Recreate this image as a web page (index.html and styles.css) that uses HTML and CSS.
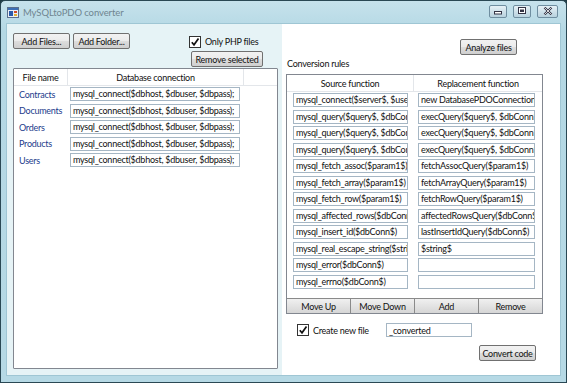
FILE: index.html
```html
<!DOCTYPE html>
<html>
<head>
<meta charset="utf-8">
<link rel="stylesheet" href="styles.css">
</head>
<body>
<div class="window">
  <div class="titlebar">
    <svg class="appicon" width="12" height="11" viewBox="0 0 12 11">
      <rect x="0.5" y="0.5" width="11" height="10" fill="#e8eef6" stroke="#5a6f8c"/>
      <rect x="1" y="1" width="10" height="2" fill="#3d6fb6"/>
      <rect x="2" y="4" width="4" height="5" fill="#2b5aa8"/>
      <rect x="7" y="4" width="3" height="2" fill="#d04a2a"/>
      <rect x="7" y="7" width="3" height="2" fill="#e0b030"/>
    </svg>
    <span class="title">MySQLtoPDO converter</span>
    <div class="controls">
      <div class="ctl"><svg width="10" height="8" viewBox="0 0 10 8"><rect x="1.5" y="4.5" width="7" height="2.5" fill="#fff" stroke="#334"/></svg></div>
      <div class="ctl"><svg width="10" height="8" viewBox="0 0 10 8"><rect x="1.5" y="0.5" width="7" height="6" fill="#fff" stroke="#334"/><rect x="3" y="2.5" width="4" height="2.5" fill="#334"/></svg></div>
      <div class="ctl close"><svg width="10" height="8" viewBox="0 0 10 8"><path d="M1.5 0.5 L8.5 7.5 M8.5 0.5 L1.5 7.5" stroke="#334" stroke-width="2.2" fill="none"/><path d="M1.5 0.5 L8.5 7.5 M8.5 0.5 L1.5 7.5" stroke="#fff" stroke-width="0.8" fill="none"/></svg></div>
    </div>
  </div>
  <div class="client">
    <div class="left">
      <div class="toprow">
        <div class="btns">
          <button class="btn w57">Add Files...</button>
          <button class="btn w57">Add Folder...</button>
        </div>
        <div class="rcol">
          <label class="chk"><span class="box"><svg width="10" height="10" viewBox="0 0 10 10"><path d="M1.8 5.2 L4 7.8 L8.5 1.5" stroke="#111" stroke-width="1.7" fill="none"/></svg></span>Only PHP files</label>
          <button class="btn rem">Remove selected</button>
        </div>
      </div>
      <div class="listbox">
        <div class="lhead">
          <div class="hc c1">File name</div>
          <div class="hc c2">Database connection</div>
          <div class="hc c3"></div>
        </div>
        <div class="lrow"><span class="fname">Contracts</span><span class="tb conn">mysql_connect($dbhost, $dbuser, $dbpass);</span></div>
        <div class="lrow"><span class="fname">Documents</span><span class="tb conn">mysql_connect($dbhost, $dbuser, $dbpass);</span></div>
        <div class="lrow"><span class="fname">Orders</span><span class="tb conn">mysql_connect($dbhost, $dbuser, $dbpass);</span></div>
        <div class="lrow"><span class="fname">Products</span><span class="tb conn">mysql_connect($dbhost, $dbuser, $dbpass);</span></div>
        <div class="lrow"><span class="fname">Users</span><span class="tb conn">mysql_connect($dbhost, $dbuser, $dbpass);</span></div>
      </div>
    </div>
    <div class="right">
      <div class="arow"><button class="btn analyze">Analyze files</button></div>
      <div class="lbl">Conversion rules</div>
      <div class="rules">
        <div class="rhead">
          <div class="hc s">Source function</div>
          <div class="hc r">Replacement function</div>
        </div>
        <div class="rbody">
          <div class="rrow"><span class="tb src">mysql_connect($server$, $user$, $pass$)</span><span class="tb rep">new DatabasePDOConnection($server$)</span></div>
          <div class="rrow"><span class="tb src">mysql_query($query$, $dbConn$)</span><span class="tb rep">execQuery($query$, $dbConn$)</span></div>
          <div class="rrow"><span class="tb src">mysql_query($query$, $dbConn$)</span><span class="tb rep">execQuery($query$, $dbConn$)</span></div>
          <div class="rrow"><span class="tb src">mysql_query($query$, $dbConn$)</span><span class="tb rep">execQuery($query$, $dbConn$)</span></div>
          <div class="rrow"><span class="tb src">mysql_fetch_assoc($param1$)</span><span class="tb rep">fetchAssocQuery($param1$)</span></div>
          <div class="rrow"><span class="tb src">mysql_fetch_array($param1$)</span><span class="tb rep">fetchArrayQuery($param1$)</span></div>
          <div class="rrow"><span class="tb src">mysql_fetch_row($param1$)</span><span class="tb rep">fetchRowQuery($param1$)</span></div>
          <div class="rrow"><span class="tb src">mysql_affected_rows($dbConn$)</span><span class="tb rep">affectedRowsQuery($dbConn$)</span></div>
          <div class="rrow"><span class="tb src">mysql_insert_id($dbConn$)</span><span class="tb rep">lastInsertIdQuery($dbConn$)</span></div>
          <div class="rrow"><span class="tb src">mysql_real_escape_string($string$)</span><span class="tb rep">$string$</span></div>
          <div class="rrow"><span class="tb src">mysql_error($dbConn$)</span><span class="tb rep"></span></div>
          <div class="rrow"><span class="tb src">mysql_errno($dbConn$)</span><span class="tb rep"></span></div>
        </div>
        <div class="rbtns">
          <button class="btn flat">Move Up</button>
          <button class="btn flat">Move Down</button>
          <button class="btn flat">Add</button>
          <button class="btn flat">Remove</button>
        </div>
      </div>
      <div class="crow">
        <label class="chk"><span class="box"><svg width="10" height="10" viewBox="0 0 10 10"><path d="M1.8 5.2 L4 7.8 L8.5 1.5" stroke="#111" stroke-width="1.7" fill="none"/></svg></span>Create new file</label>
        <span class="tb suffix">_converted</span>
      </div>
      <div class="convrow"><button class="btn convert">Convert code</button></div>
    </div>
  </div>
</div>
</body>
</html>
```

FILE: styles.css
```css
* { box-sizing: border-box; }
html, body { margin: 0; padding: 0; }
body {
  width: 567px; height: 383px; overflow: hidden;
  font-family: "Lato", "Noto Sans", sans-serif;
  font-size: 9px;
  letter-spacing: -0.25px;
  color: #111;
  background: #1e3a44;
}
.window {
  width: 567px; height: 383px;
  border: 1px solid #2a4854;
  border-radius: 5px 5px 0 0;
  background: linear-gradient(180deg, #c6e2ec 0%, #b4d8e4 8%, #b6d9e5 100%);
  display: flex; flex-direction: column;
  padding: 0 5px 6px 5px;
}
.titlebar {
  height: 22px; flex: none;
  display: flex; align-items: center;
  padding-left: 1px;
}
.appicon { margin-right: 4px; }
.title {
  color: #6f8590; font-size: 9.5px; letter-spacing: -0.1px;
}
.controls { margin-left: auto; display: flex; gap: 6px; margin-right: 3px; margin-top: -2px; }
.ctl {
  width: 18px; height: 13px;
  border: 1px solid #6f8ea0;
  border-radius: 2px;
  background: linear-gradient(180deg, #e6f1f6, #b8d2de);
  display: flex; align-items: center; justify-content: center;
}
.ctl.close { width: 21px; }
.client {
  flex: 1; display: flex;
  border: 1px solid #9fc6d4;
}
.left {
  width: 275px; flex: none;
  background: #e6f3f6;
  padding: 9px 4px 6px 6px;
  display: flex; flex-direction: column;
}
.right {
  flex: 1; background: #fff;
  display: flex; flex-direction: column;
  padding: 0 16px 0 4px;
}
.btn {
  font-family: inherit; font-size: 9px; letter-spacing: -0.25px; color: #111;
  height: 16px; padding: 0 1px; margin: 0;
  border: 1px solid #707070;
  border-radius: 2px;
  background: linear-gradient(180deg, #f2f2f2 0%, #ebebeb 48%, #dddddd 52%, #cfcfcf 100%);
  line-height: 13px;
  white-space: nowrap;
}
.toprow { display: flex; align-items: flex-start; }
.btns { display: flex; gap: 3px; }
.w57 { width: 57px; }
.rcol { margin-left: auto; margin-right: 15px; width: 74px; display: flex; flex-direction: column; align-items: flex-start; }
.chk { display: flex; align-items: center; gap: 4px; height: 13px; white-space: nowrap; }
.rcol .chk { margin-top: 2px; margin-left: 0; }
.box {
  width: 12px; height: 12px;
  border: 1px solid #333;
  background: #fff;
  display: flex; align-items: center; justify-content: center;
}
.rem { width: 72px; margin-top: 3px; margin-left: 2px; }
.listbox {
  margin-top: 1px;
  flex: 1;
  background: #fff;
  border: 1px solid #828790;
  border-radius: 1px;
}
.lhead { display: flex; height: 17px; border-bottom: 1px solid #e3e6ea; }
.hc { display: flex; align-items: center; justify-content: center; border-right: 1px solid #e3e6ea; }
.c1 { width: 54px; }
.c2 { width: 176px; }
.c3 { flex: 1; border-right: none; }
.lrow { display: flex; align-items: center; height: 16.5px; }
.lrow:first-of-type { margin-top: 1px; }
.fname { width: 56px; padding-left: 5px; color: #1d3c8c; }
.tb {
  display: block;
  height: 14px;
  border: 1px solid #a5b6c4;
  background: #fff;
  padding: 0 2px;
  line-height: 12px;
  white-space: nowrap; overflow: hidden;
}
.conn { width: 170px; }
.arow { display: flex; justify-content: flex-end; padding-top: 15px; padding-right: 27px; }
.analyze { width: 57px; }
.lbl { margin-top: 2px; padding-left: 1px; height: 14px; line-height: 14px; }
.rules {
  margin-top: 3px;
  width: 257px; height: 240px;
  border: 1px solid #828790;
  display: flex; flex-direction: column;
}
.rhead { display: flex; height: 17px; border-bottom: 1px solid #e3e6ea; }
.rhead .s { width: 127px; }
.rhead .r { flex: 1; border-right: none; }
.rbody { flex: 1; padding-top: 0; }
.rrow { display: flex; align-items: center; height: 16.5px; padding-left: 6px; }
.src { width: 115px; }
.rep { width: 117px; margin-left: 10px; }
.rbtns { display: flex; height: 15px; }
.flat {
  flex: 1; height: 15px; border-radius: 0;
  border: 1px solid #8a8a8a; border-bottom: none; border-left: none;
  background: linear-gradient(180deg, #f0f0f0, #d6d6d6);
}
.rbtns .flat:first-child { border-left: none; }
.rbtns .flat:last-child { border-right: none; }
.crow { display: flex; align-items: center; height: 14px; margin-top: 9px; padding-left: 11px; }
.crow .chk { width: 89px; }
.suffix { width: 86px; height: 14px; line-height: 13px; }
.convrow { display: flex; justify-content: flex-end; padding-right: 8px; margin-top: 8px; }
.convert { width: 57px; }
```
